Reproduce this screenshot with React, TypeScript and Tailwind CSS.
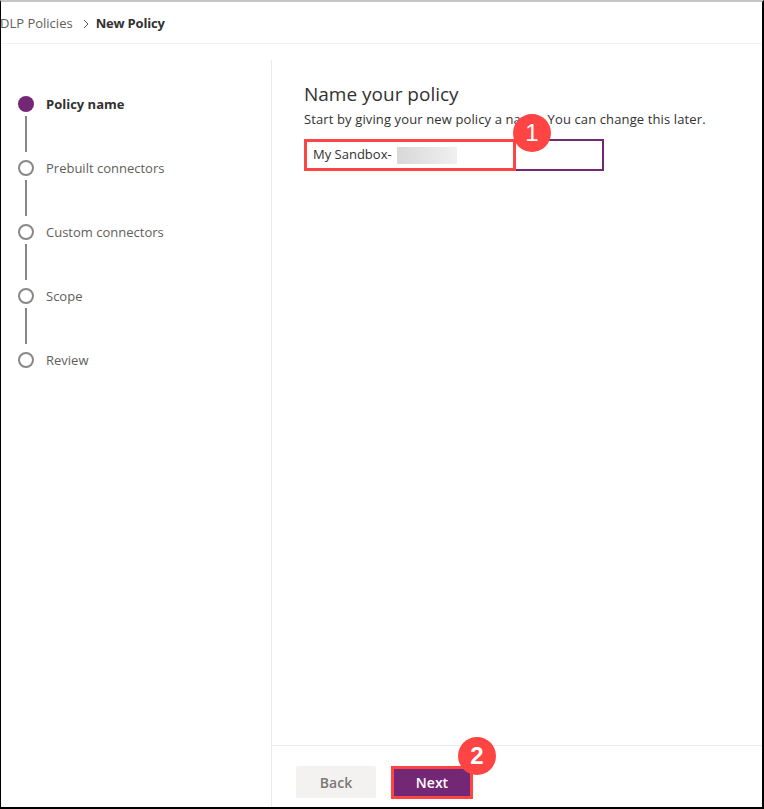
import React from "react";

const font = { fontFamily: '"Open Sans", "Noto Sans", "Liberation Sans", sans-serif' };

const steps = ["Policy name", "Prebuilt connectors", "Custom connectors", "Scope", "Review"];

export default function App() {
  return (
    <div
      className="w-[764px] h-[809px] bg-white flex flex-col border-t-2 border-t-[#c8c6c4] border-l border-l-black border-r-2 border-r-black border-b-2 border-b-black overflow-hidden"
      style={font}
    >
      {/* header */}
      <div className="h-[42px] shrink-0 border-b border-[#f3f2f1] flex items-center pt-[3px] text-[13px] text-[#323130]">
        <span className="ml-[-1px] text-[#605e5c]">DLP Policies</span>
        <svg className="ml-[9px] mr-[6px]" width="8" height="10" viewBox="0 0 8 10">
          <path d="M2 1 L6 5 L2 9" fill="none" stroke="#605e5c" strokeWidth="1" />
        </svg>
        <span className="font-bold tracking-[-0.2px]">New Policy</span>
      </div>

      <div className="flex-1 flex pt-[16px] min-h-0">
        {/* sidebar */}
        <div className="w-[271px] shrink-0 border-r border-[#edebe9] pt-[36px] pl-[17px]">
          {steps.map((s, i) => (
            <div key={s}>
              <div className="flex items-center h-[16px]">
                {i === 0 ? (
                  <div className="w-[16px] h-[16px] rounded-full bg-[#742774]" />
                ) : (
                  <div className="w-[16px] h-[16px] rounded-full border-2 border-[#8a8886] bg-white" />
                )}
                <span
                  className={
                    "ml-[12px] text-[13px] leading-none " +
                    (i === 0 ? "font-bold text-[#323130]" : "text-[#605e5c]")
                  }
                >
                  {s}
                </span>
              </div>
              {i < steps.length - 1 && (
                <div className="w-[2px] h-[36px] mt-[4px] mb-[8px] ml-[7px] bg-[#8a8886]" />
              )}
            </div>
          ))}
        </div>

        {/* main */}
        <div className="flex-1 flex flex-col min-w-0">
          <div className="flex-1 pl-[32px] pt-[20px]">
            <div className="text-[19px] leading-[28px] text-[#323130]">Name your policy</div>
            <div className="text-[13px] leading-[18px] tracking-[0.12px] text-[#323130] mt-[2px]">
              Start by giving your new policy a name. You can change this later.
            </div>
            <div className="relative mt-[11px] w-[300px] h-[32px] border-2 border-[#742774] flex items-center">
              <span className="ml-[7px] text-[13px] text-[#323130]">My Sandbox-</span>
              <div className="ml-[5px] w-[60px] h-[17px] bg-gradient-to-r from-[#d8d8d8] via-[#e4e4e4] to-[#f0f0f0]" />
              <div className="absolute left-[-2px] top-[-2px] w-[212px] h-[32px] border-[3px] border-[#ff4444]" />
              <div
                className="absolute left-[207px] top-[-27px] w-[38px] h-[38px] rounded-full bg-[#ff4444] flex items-center justify-center text-white text-[24px] leading-none"
                style={{ fontFamily: '"Liberation Sans", Arial, sans-serif' }}
              >
                1
              </div>
            </div>
          </div>

          <div className="h-[62px] shrink-0 border-t border-[#edebe9] flex items-start pt-[20px] pl-[24px] gap-[16px]">
            <div className="w-[80px] h-[32px] rounded-[2px] bg-[#f3f2f1] flex items-center justify-center text-[14px] font-semibold text-[#7a7876]">
              Back
            </div>
            <div className="relative w-[82px] h-[33px] border-[3px] border-[#ff4444] bg-[#742774] flex items-center justify-center text-[14px] font-semibold text-white ml-[-1px]">
              Next
              <div
                className="absolute left-[64px] top-[-32px] w-[38px] h-[38px] rounded-full bg-[#ff4444] flex items-center justify-center text-white text-[24px] leading-none"
                style={{ fontFamily: '"Liberation Sans", Arial, sans-serif' }}
              >
                2
              </div>
            </div>
          </div>
        </div>
      </div>
    </div>
  );
}
